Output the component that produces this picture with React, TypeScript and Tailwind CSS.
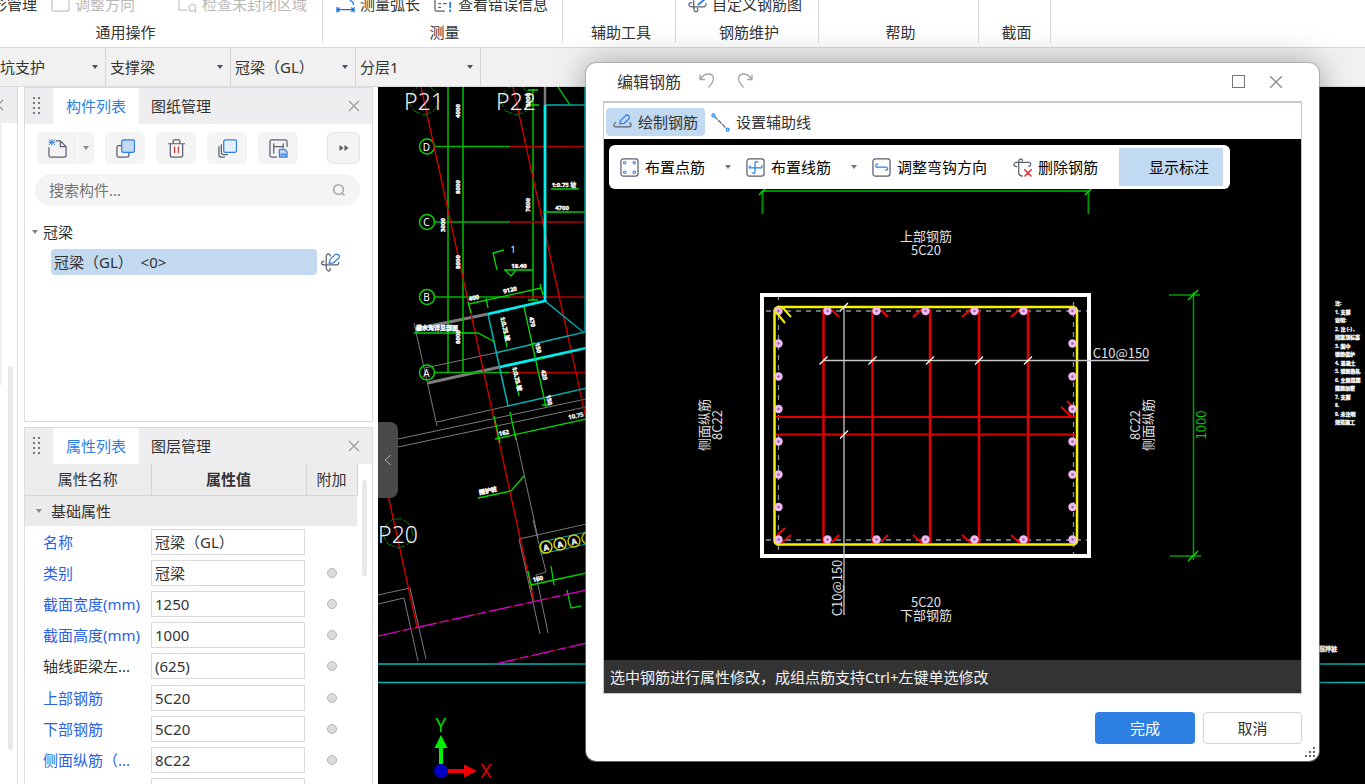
import type { ReactNode } from 'react';

const GREEN = '#00d800';
const CYAN = '#00f0f0';
const RED = '#d80000';
const GRAY = '#7c7c7c';

/* ---------- small shared pieces ---------- */

function Caret({ className = 'text-[#4b5060]' }: { className?: string }) {
  return (
    <svg className={`h-1 w-2 shrink-0 ${className}`} viewBox="0 0 8 4">
      <path d="M1 0H7L4 4Z" fill="currentColor" />
    </svg>
  );
}

function CloseIcon({ className = 'h-3 w-3' }: { className?: string }) {
  return (
    <svg className={className} viewBox="0 0 12 12" stroke="currentColor" strokeWidth="1.200" fill="none">
      <path d="M1 1L11 11M11 1L1 11" />
    </svg>
  );
}

function Icon({ children }: { children: ReactNode }) {
  return (
    <svg
      className="h-[19px] w-[19px] shrink-0"
      viewBox="0 0 20 20"
      fill="none"
      stroke="#5a5f70"
      strokeWidth="1.300"
      strokeLinecap="round"
      strokeLinejoin="round"
    >
      {children}
    </svg>
  );
}

const BLUE = '#2d7fe8';

const NewIcon = () => (
  <Icon>
    <path d="M8.500 2H13L19 8V17Q19 19 17 19H3Q1 19 1 17V9M13 2V8H19" />
    <path d="M4 0.500V6.500M1 3.500H7M1 1L7 6M7 1L1 6" stroke={BLUE} strokeWidth="1" />
  </Icon>
);
const CopyIcon = () => (
  <Icon>
    <path d="M6 7H3Q1 7 1 9V17Q1 19 3 19H11Q13.500 19 13.500 17V14.500" />
    <rect x="6" y="1" width="13.500" height="13" rx="2" fill="#c2d9f2" stroke={BLUE} />
  </Icon>
);
const TrashIcon = () => (
  <Icon>
    <path d="M1.500 5H18.500M6.500 4.500V2Q6.500 1 7.500 1H12.500Q13.500 1 13.500 2V4.500M3.500 5V17Q3.500 19 5.500 19H14.500Q16.500 19 16.500 17V5" />
    <path d="M8 8V15M12 8V15" stroke="#d63d3d" strokeLinecap="butt" />
  </Icon>
);
const LayersIcon = () => (
  <Icon>
    <path d="M1 8V16.500Q1 19 3 19H7M3.500 6V14Q3.500 16.500 6 16.500H10" />
    <rect x="6" y="1" width="13.500" height="13" rx="2" fill="#e3effc" stroke={BLUE} />
  </Icon>
);
const SaveFormIcon = () => (
  <Icon>
    <path d="M8 19H3Q1 19 1 17V3Q1 1 3 1H17Q19 1 19 3V8M5 5V15M5 8H15M15 5V9" />
    <path d="M11 11H16.500L19 13.500V19H11ZM13 19V16H17V19" stroke={BLUE} fill="#c2d9f2" />
  </Icon>
);
const BarEditIcon = () => (
  <Icon>
    <path d="M3 8.500Q0.500 9 0.500 11Q1 12.500 3 12.500H17Q19 12 18.500 10M10 3Q9.500 1 7.500 1Q5.500 1.500 5.500 4V16Q6 18.500 8 19Q10 18.500 9.500 16" />
    <path d="M8.500 11L9.500 7L15 1.500Q16.500 0.500 18.500 2T18.500 5.500L13 10.500Z" stroke={BLUE} fill="#fff" />
  </Icon>
);
const DrawBarIcon = () => (
  <Icon>
    <path d="M3 10Q1 10.500 1 12.500T3 14.500H17Q19 14.500 19 12.500T17.500 10.500" />
    <path d="M7 11.500L8 8L13.500 2.500Q15 1.500 16.500 3T17 6L11.500 11Z" stroke={BLUE} />
  </Icon>
);
const AuxLineIcon = () => (
  <Icon>
    <path d="M3.500 3.500L16 16" strokeDasharray="4 2" />
    <circle cx="2.500" cy="2.500" r="1.500" stroke={BLUE} />
    <circle cx="17.500" cy="17.500" r="1.500" stroke={BLUE} />
  </Icon>
);
const DotBarIcon = () => (
  <Icon>
    <rect x="1" y="1" width="18" height="18" rx="2.500" />
    <g stroke={BLUE} strokeWidth="1.100">
      <circle cx="5" cy="5" r="1.300" />
      <circle cx="15" cy="5" r="1.300" />
      <circle cx="5" cy="15" r="1.300" />
      <circle cx="15" cy="15" r="1.300" />
    </g>
  </Icon>
);
const LineBarIcon = () => (
  <Icon>
    <rect x="1" y="1" width="18" height="18" rx="2.500" />
    <path
      stroke={BLUE}
      d="M4.500 8.500Q3 9 3.500 10.500H16Q17.500 10 16.500 8M12.500 4.500Q10 3 9.500 5V15Q9 17 6.500 15.500"
    />
  </Icon>
);
const HookIcon = () => (
  <Icon>
    <rect x="1" y="1" width="18" height="18" rx="2.500" />
    <path stroke={BLUE} d="M6 6.500Q4 6 4 8T6 9.500H15Q16.500 10 16.500 11.500T14 12.500" />
  </Icon>
);
const DeleteBarIcon = () => (
  <Icon>
    <path d="M4 9Q1 9 1 7T3 4.500H17Q19 5 18.500 7T16.500 8.500M10 3Q10 1 8 1Q6 1.500 6 4V16Q6.500 19 10 19" />
    <path d="M12.500 12.500L19 19M19 12.500L12.500 19" stroke="#e03a3a" strokeWidth="1.600" />
  </Icon>
);
const BoxIcon = () => (
  <Icon>
    <rect x="1" y="3" width="18" height="14" rx="2" stroke="#c4c4c4" />
  </Icon>
);
const RegionIcon = () => (
  <Icon>
    <path d="M1 3V16H9" stroke="#c4c4c4" />
    <circle cx="15" cy="13.500" r="3.500" stroke="#c4c4c4" />
    <path d="M17.500 16L19 18" stroke="#c4c4c4" />
  </Icon>
);
const MeasureIcon = () => (
  <Icon>
    <path d="M1 13V18M19 13V18M1 15.500H19M3.500 13.500L1.500 15.500L3.500 17.500M16.500 13.500L18.500 15.500L16.500 17.500M15 6Q19 7 18 10" stroke="#1f6fd0" />
  </Icon>
);
const ErrorIcon = () => (
  <Icon>
    <path d="M1 3V15Q1 17 3 17H11M5 9H7M10 9H13M5 13H7" />
    <path d="M17 8V13M17 16V17" stroke={BLUE} strokeWidth="2" />
  </Icon>
);
const CustomIcon = () => (
  <Icon>
    <path d="M4 8Q1 8 1 10T4 12.500H16Q19 12.500 19 9M6 6V14Q6.500 18 9 17.500Q11 17 10 14" />
    <path d="M11 10L17 5" stroke={BLUE} strokeWidth="2" />
  </Icon>
);

/* ---------- ribbon ---------- */

function RibbonItem({ icon, text, muted }: { icon?: ReactNode; text: string; muted?: boolean }) {
  return (
    <button className={`flex items-center gap-[5px] whitespace-nowrap ${muted ? 'text-[#b9b9b9]' : ''}`}>
      {icon}
      {text}
    </button>
  );
}

function RibbonGroup({ width, label, labelClass = '', children }: { width: string; label: string; labelClass?: string; children?: ReactNode }) {
  return (
    <section className={`flex h-[43px] shrink-0 flex-col justify-end gap-[5px] border-r border-[#dcdcdc] ${width}`}>
      <div className="flex h-6 items-center">{children}</div>
      <h2 className={`text-center leading-[22px] ${labelClass}`}>{label}</h2>
    </section>
  );
}

function Ribbon() {
  return (
    <header className="flex h-12 shrink-0 overflow-hidden border-b border-[#d9d9d9] bg-white">
      <RibbonGroup width="w-[323px]" label="通用操作" labelClass="pr-[71px]">
        <div className="-ml-2 flex items-center">
          <RibbonItem text="形管理" />
          <div className="ml-3.5">
            <RibbonItem icon={<BoxIcon />} text="调整方向" muted />
          </div>
          <div className="ml-[43px]">
            <RibbonItem icon={<RegionIcon />} text="检查未封闭区域" muted />
          </div>
        </div>
      </RibbonGroup>
      <RibbonGroup width="w-[240px]" label="测量" labelClass="pl-1">
        <div className="ml-[13px] flex items-center gap-3.5">
          <RibbonItem icon={<MeasureIcon />} text="测量弧长" />
          <RibbonItem icon={<ErrorIcon />} text="查看错误信息" />
        </div>
      </RibbonGroup>
      <RibbonGroup width="w-[113px]" label="辅助工具" labelClass="pl-1" />
      <RibbonGroup width="w-[143px]" label="钢筋维护" labelClass="pl-1">
        <div className="ml-3">
          <RibbonItem icon={<CustomIcon />} text="自定义钢筋图" />
        </div>
      </RibbonGroup>
      <RibbonGroup width="w-[160px]" label="帮助" labelClass="pl-1" />
      <RibbonGroup width="w-[72px]" label="截面" labelClass="pl-1" />
    </header>
  );
}

function SelectorBar() {
  const items = [
    { name: '专业', value: '坑支护', cls: 'w-[106px] pl-0' },
    { name: '类型', value: '支撑梁', cls: 'w-[125px] pl-1' },
    { name: '构件', value: '冠梁（GL）', cls: 'w-[125px] pl-1' },
    { name: '分层', value: '分层1', cls: 'w-[125px] pl-1' },
  ];
  return (
    <nav className="flex h-[39px] shrink-0 border-b border-[#dcdcdc] bg-[#f1f1f1]">
      {items.map((it) => (
        <div key={it.name} className={`relative flex items-center border-r border-[#d4d4d4] ${it.cls}`}>
          <select aria-label={it.name} className="h-full w-full appearance-none bg-transparent pr-5 outline-none">
            <option>{it.value}</option>
          </select>
          <div className="pointer-events-none absolute right-1.5">
            <Caret />
          </div>
        </div>
      ))}
    </nav>
  );
}

/* ---------- left panels ---------- */

function PanelTabs({ active, other }: { active: string; other: string }) {
  return (
    <div className="flex h-9 shrink-0 items-center bg-[#eeeef0]" role="tablist">
      <svg className="mx-2 h-5 w-3 shrink-0" viewBox="0 0 12 20" fill="#77777c">
        {[1, 6, 11, 16].map((y) => (
          <g key={y}>
            <rect x="0" y={y} width="2" height="2" />
            <rect x="5" y={y} width="2" height="2" />
          </g>
        ))}
      </svg>
      <button role="tab" aria-selected="true" className="h-full w-[86px] bg-white text-[#2d7fe0]">
        {active}
      </button>
      <button role="tab" aria-selected="false" className="h-full px-3">
        {other}
      </button>
      <button aria-label="关闭" className="mr-3 ml-auto text-[#9a9a9a]">
        <CloseIcon />
      </button>
    </div>
  );
}

const toolBtn = 'flex h-8 w-10 items-center justify-center rounded-md bg-[#f4f4f4]';

function ComponentPanel() {
  return (
    <section className="flex h-[335px] shrink-0 flex-col border border-[#dcdcdc] bg-white">
      <PanelTabs active="构件列表" other="图纸管理" />
      <div className="mx-3 mt-2 flex items-center gap-[11px]">
        <div className="flex gap-px">
          <button aria-label="新建" className="flex h-8 w-10 items-center justify-center rounded-l-md bg-[#f4f4f4]">
            <NewIcon />
          </button>
          <button aria-label="新建选项" className="flex h-8 w-4 items-center justify-center rounded-r-md bg-[#f4f4f4]">
            <Caret className="text-[#8c8c8c]" />
          </button>
        </div>
        <button aria-label="复制" className={toolBtn}><CopyIcon /></button>
        <button aria-label="删除" className={toolBtn}><TrashIcon /></button>
        <button aria-label="层间复制" className={toolBtn}><LayersIcon /></button>
        <button aria-label="存档" className={toolBtn}><SaveFormIcon /></button>
        <button aria-label="更多" className="ml-auto flex h-8 w-[33px] items-center justify-center rounded-md border border-[#e3e5e7] bg-[#f4f4f4]">
          <svg className="h-2 w-2.5" viewBox="0 0 10 8" fill="#555a66">
            <path d="M0.500 1L4.500 4L0.500 7ZM5.500 1L9.500 4L5.500 7Z" />
          </svg>
        </button>
      </div>
      <label className="mr-3 ml-2.5 mt-2.5 flex h-8 items-center rounded-full bg-[#f4f4f4] px-3.5">
        <input aria-label="搜索构件" placeholder="搜索构件..." className="min-w-0 flex-1 bg-transparent outline-none placeholder:text-[#757575]" />
        <svg className="h-3.5 w-3.5" viewBox="0 0 14 14" fill="none" stroke="#a8a8a8" strokeWidth="1.600">
          <circle cx="6.500" cy="6.500" r="4.800" />
          <path d="M10 10L12.500 12.500" />
        </svg>
      </label>
      <div className="mt-3.5 flex h-6 items-center gap-1 pl-1.5">
        <Caret className="text-[#808080]" />
        冠梁
      </div>
      <div className="mt-[5px] flex items-center gap-1 pl-[26px]">
        <button className="flex h-[26px] w-[266px] items-center rounded bg-[#c2d9f0] pl-[3px] whitespace-pre">
          {'冠梁（GL）  <0>'}
        </button>
        <BarEditIcon />
      </div>
    </section>
  );
}

const props: { label: string; value: string; plain?: boolean; fixed?: boolean }[] = [
  { label: '名称', value: '冠梁（GL）', fixed: true },
  { label: '类别', value: '冠梁' },
  { label: '截面宽度(mm)', value: '1250' },
  { label: '截面高度(mm)', value: '1000' },
  { label: '轴线距梁左...', value: '(625)', plain: true },
  { label: '上部钢筋', value: '5C20' },
  { label: '下部钢筋', value: '5C20' },
  { label: '侧面纵筋（...', value: '8C22' },
  { label: '', value: '' },
];

function PropertyPanel() {
  return (
    <section className="flex min-h-0 flex-1 flex-col overflow-hidden border border-b-0 border-[#dcdcdc] bg-white">
      <PanelTabs active="属性列表" other="图层管理" />
      <div className="flex items-start overflow-hidden">
        <table className="h-[343px] w-[332px] shrink-0 table-fixed border-collapse">
          <colgroup>
            <col className="w-[126px]" />
            <col className="w-[155px]" />
            <col className="w-[51px]" />
          </colgroup>
          <thead>
            <tr className="h-[31px] bg-[#ececec]">
              <th className="border-r border-b border-[#d4d4d4] font-normal">属性名称</th>
              <th className="border-r border-b border-[#d4d4d4] font-semibold">属性值</th>
              <th className="border-r border-b border-[#d4d4d4] font-normal">附加</th>
            </tr>
          </thead>
          <tbody>
            <tr className="h-[31px] bg-[#ebebeb]">
              <td colSpan={3}>
                <div className="flex items-center gap-2 pl-2.5">
                  <Caret className="text-[#8a8a8a]" />
                  基础属性
                </div>
              </td>
            </tr>
            {props.map((p, i) => (
              <tr key={i}>
                <td className={`pl-[18px] whitespace-nowrap ${p.plain ? '' : 'text-[#2b62e3]'}`}>
                  <label htmlFor={`prop-${i}`}>{p.label}</label>
                </td>
                <td>
                  <input
                    id={`prop-${i}`}
                    aria-label={p.label || '其他'}
                    defaultValue={p.value}
                    className="block h-[26px] w-[154px] border border-[#dadada] bg-white pl-[3px] outline-none"
                  />
                </td>
                <td>
                  {!p.fixed && (
                    <input
                      type="checkbox"
                      aria-label={`附加 ${p.label}`}
                      className="mx-auto block h-2.5 w-2.5 appearance-none rounded-full border border-[#b4b4b8] bg-[#dcdcde]"
                    />
                  )}
                </td>
              </tr>
            ))}
          </tbody>
        </table>
        <div className="mt-4 ml-1 h-24 w-[5px] rounded-full bg-[#e8e8e8]" />
      </div>
    </section>
  );
}

/* ---------- site plan ---------- */

function Note({ x, y, t, r = 0, s = 6 }: { x: number; y: number; t: string; r?: number; s?: number }) {
  return (
    <text
      x={x}
      y={y}
      fontSize={s}
      fontWeight="700"
      fill="#fff"
      stroke="#fff"
      strokeWidth="0.400"
      textAnchor="middle"
      dominantBaseline="central"
      transform={`rotate(${r} ${x} ${y})`}
    >
      {t}
    </text>
  );
}

function GridBubble({ y, t }: { y: number; t: string }) {
  return (
    <g>
      <circle cx="427" cy={y} r="7.500" fill="none" stroke={GREEN} strokeWidth="1.500" />
      <text x="426.500" y={y} fontSize="10" fill="#fff" textAnchor="middle" dominantBaseline="central">
        {t}
      </text>
      <path d={`M435 ${y}H510`} stroke="#00b400" strokeWidth="1.300" />
      <path d={`M510 ${y}H600`} stroke="#b80000" strokeWidth="1.300" />
    </g>
  );
}

function PileTag({ x, y, t }: { x: number; y: number; t: string }) {
  return (
    <g>
      <path
        d={`M${x - 5} ${y - 15}L${x + 5} ${y - 15}L${x + 13} ${y - 8}L${x + 15} ${y + 2}L${x + 9} ${y + 11}L${x} ${y + 14}L${x - 10} ${y + 10}L${x - 15} ${y + 1}L${x - 12} ${y - 9}Z`}
        fill="none"
        stroke="#007c00"
        strokeDasharray="9 2"
      />
      <text x={x} y={y} fontSize="23" fill="#f0f0f0" fontWeight="300" textAnchor="middle" dominantBaseline="central">
        {t}
      </text>
    </g>
  );
}

const sideNotes = ['注:', '1. 支撑', '说明:', '2. 注  (-)  ,', '冠梁顶标高', '3.   图中', '钢筋保护', '4. 混凝土', '5. 钢筋热轧', '6. 主筋连接', '箍筋加密', '7. 支撑', '8.', '9. 未注明', '规范施工'];

function SitePlan() {
  return (
    <svg className="h-full w-full" fill="none" fontFamily="'Noto Sans', 'Noto Sans CJK SC', sans-serif">
      <g transform="translate(-378 -87)">
        <g stroke={GRAY}>
          <path d="M425 368L495 353M414 323L437 426M437 422L508 406M398 439L600 396M398 447L600 404" />
          <path d="M488 314L415 329M500 367L428 383" strokeWidth="3" />
          <path d="M545 87V105" strokeWidth="2.500" />
          <path d="M515 433L538 538M533 520L546 572L536 575L548 633M600 521L519 539L540 634M378 595L410 588L426 659M378 604L404 598L418 661" />
        </g>
        <path d="M448 87V372M463 87V372M533 89V300" stroke="#00c000" strokeWidth="1.500" />
        <GridBubble y={146.5} t="D" />
        <GridBubble y={222} t="C" />
        <GridBubble y={297} t="B" />
        <GridBubble y={372.5} t="A" />
        <g stroke={RED} strokeWidth="1.300">
          <path d="M421 87L534 601M513 87L586 418L600 482M388 495L417 627" />
        </g>
        <g stroke="#00b4b4">
          <path d="M545 105H600M585 87V332M545 301L583 332M488 314L508 406L600 385M495 353L585 332" strokeWidth="1.500" />
          <path d="M378 664H1365M378 682.500H1365" strokeWidth="1.500" />
          <path d="M600 529L541 542V554L600 541" />
        </g>
        <path d="M545 105V301L488 314M500 367L600 345" stroke={CYAN} strokeWidth="2.800" />
        <g stroke={GREEN} strokeWidth="1.300">
          <path d="M414 333H478L495 342M501 317L507 347M513 367L519 396M524 307L546 407M469 304L541 288M468 302L471 313M486 298L488 308M540 284L543 295" />
          <path d="M494 416L500 443M510 412L516 440M495 439L600 416M478 498L511 491L524 476M528 571L532 590M551 566L554 585M531 585L600 570M567 590L571 608L581 606" />
          <path d="M497 270L493 253L504 250M504 270H533M505 270L511 276L516 270M551 189H579M543 212H586M558 87L570 105M528 90H538M529 105H539M528 300H538M542 405H550M529 345L535 343M537 360L543 358" />
        </g>
        <g strokeWidth="1.200">
          <path d="M378 636L600 587M495 664L600 640" stroke="#700000" />
          <path d="M378 636L600 587" stroke="#e000e0" strokeDasharray="22 4 8 4" />
          <path d="M495 664L600 640" stroke="#e000e0" strokeDasharray="22 4 8 4" />
        </g>
        <PileTag x={424} y={101} t="P21" />
        <PileTag x={516} y={101} t="P22" />
        <PileTag x={398} y={534} t="P20" />
        <Note x={458} y={111} t="4000" r={-90} />
        <Note x={458} y={187} t="8000" r={-90} />
        <Note x={458} y={262} t="8000" r={-90} />
        <Note x={458} y={337} t="8000" r={-90} />
        <Note x={443} y={225} t="3000" r={-90} />
        <Note x={528} y={205} t="7600" r={-90} />
        <Note x={528} y={100} t="3000" r={-90} />
        <Note x={564} y={185} t="1:0.75  坡" />
        <Note x={562} y={208} t="4700" />
        <text x="513" y="253" fontSize="9" fill="#fff" textAnchor="middle">1</text>
        <Note x={519} y={266} t="18.40" />
        <Note x={474} y={298} t="400" r={-12} />
        <Note x={510} y={290} t="9120" r={-12} />
        <Note x={437} y={328} t="截水沟详见剖面" />
        <Note x={505} y={329} t="1:0.75 坡" r={77} />
        <Note x={517} y={379} t="1:0.75 坡" r={77} />
        <Note x={532} y={322} t="470" r={77} />
        <Note x={538} y={348} t="150" r={77} />
        <Note x={544} y={375} t="420" r={77} />
        <Note x={549} y={400} t="150" r={77} />
        <Note x={504} y={433} t="162" r={-12} />
        <Note x={576} y={416} t="10.75" r={-12} />
        <Note x={488} y={491} t="围护桩" r={-12} />
        <Note x={538} y={579} t="160" r={-12} />
        <Note x={1328} y={649} t="搅拌桩" />
        {[546, 560, 574, 588].map((x, i) => (
          <g key={x}>
            <circle cx={x} cy={547 - i * 3} r="6" stroke="#d8d800" strokeWidth="1.500" />
            <Note x={x} y={547 - i * 3} t="A" r={-12} s={8} />
          </g>
        ))}
        <g fontSize="5" fontWeight="700" fill="#fff" stroke="#fff" strokeWidth="0.300" xmlSpace="preserve">
          {sideNotes.map((t, i) => (
            <text key={i} x="1335" y={305 + i * 8.500}>
              {t}
            </text>
          ))}
        </g>
        <path d="M441 764V746" stroke="#00f000" strokeWidth="4" />
        <path d="M434.500 748H447.500L441 735Z" fill="#00f000" />
        <path d="M446 771H466" stroke="#f00000" strokeWidth="4" />
        <path d="M464 764.500V777.500L477 771Z" fill="#f00000" />
        <circle cx="441" cy="771" r="7" fill="#0000c0" />
        <text x="441" y="732" fontSize="19" fill="#00d800" textAnchor="middle">Y</text>
        <text x="486" y="778" fontSize="19" fill="#e80000" textAnchor="middle">X</text>
      </g>
    </svg>
  );
}

/* ---------- section drawing ---------- */

const barX = [779, 828, 877, 926, 975, 1024, 1073];
const barY = [343.5, 376.5, 409, 441.5, 474.5, 507];
const tieX = [823.5, 872.5, 930, 979, 1028];

function Bar({ x, y }: { x: number; y: number }) {
  return (
    <g>
      <circle cx={x} cy={y} r="4.200" fill="#f0b8f4" />
      <circle cx={x} cy={y} r="1.200" fill="#8a6a9a" />
    </g>
  );
}

function Label({ x, y, t, r = 0, fill = '#e0e0e0', s = 13 }: { x: number; y: number; t: string; r?: number; fill?: string; s?: number }) {
  return (
    <text x={x} y={y} fontSize={s} fill={fill} textAnchor="middle" dominantBaseline="central" transform={`rotate(${r} ${x} ${y})`}>
      {t}
    </text>
  );
}

function SectionDrawing() {
  return (
    <svg className="h-full w-full" fill="none" fontFamily="'Noto Sans CJK SC', 'Noto Sans', sans-serif">
      <g transform="translate(-604 -139)">
        <path d="M762 191H1090M762.500 191V214M1088.500 191V214" stroke="#009000" strokeWidth="2" />
        <path d="M759 195L766 188M1085 195L1092 188" stroke="#00e000" strokeWidth="1.500" />
        <g stroke="#00a000" strokeWidth="1.500">
          <path d="M1193.500 292V560M1169 295H1200M1170 556H1201" />
          <path d="M1188 300L1198 290M1188 561L1198 551" stroke="#00e000" />
        </g>
        <g stroke="#8496a8" strokeWidth="1.300" strokeDasharray="5 5">
          <path d="M778.500 295V556M1073.500 302V556M766 311H1087M766 540H1087" />
        </g>
        <rect x="762" y="295" width="327" height="261" stroke="#fff" strokeWidth="4" />
        <rect x="774.500" y="307" width="302.500" height="237.500" rx="4" stroke="#f4f400" strokeWidth="2.500" />
        <g stroke="#e00000" strokeWidth="2.500">
          {tieX.map((x) => (
            <path key={x} d={`M${x} 309V543`} />
          ))}
          <path d="M776 417H1075M776 434.500H1075" strokeWidth="2.200" />
        </g>
        <g stroke="#f00000" strokeWidth="2">
          <path d="M832 310L839 317M881 310L888 317M913 317L922 309M962 317L971 309M1011 317L1020 309" />
          <path d="M832 542L839 535M881 542L888 535M913 535L922 543M962 535L971 543M1011 535L1020 543" />
          <path d="M777 535L785 528M781 543L791 535M1061 407L1071 416M1067 401L1074 408" />
        </g>
        {barX.map((x) => (
          <g key={x}>
            <Bar x={x - 0.5} y={311} />
            <Bar x={x - 0.5} y={539.5} />
          </g>
        ))}
        {barY.map((y) => (
          <g key={y}>
            <Bar x={778.5} y={y} />
            <Bar x={1072.5} y={y} />
          </g>
        ))}
        <path d="M782 307L791 317M776 312L785 323" stroke="#f0f000" strokeWidth="2" />
        <g stroke="#c8c8c8" strokeWidth="1.300">
          <path d="M823 360.500H1149M844 307V615" />
          {tieX.map((x) => (
            <path key={x} d={`M${x - 4} 364.500L${x + 4} 356.500`} stroke="#fff" />
          ))}
          <path d="M840 311L848 303M840 438.500L848 430.500" stroke="#fff" />
        </g>
        <Label x={926} y={235} t="上部钢筋" />
        <Label x={926} y={249} t="5C20" />
        <Label x={926} y={601} t="5C20" />
        <Label x={926} y={614} t="下部钢筋" />
        <Label x={703} y={425} t="侧面纵筋" r={-90} />
        <Label x={716} y={425} t="8C22" r={-90} />
        <Label x={1134} y={425} t="8C22" r={-90} />
        <Label x={1147} y={425} t="侧面纵筋" r={-90} />
        <Label x={1200} y={425} t="1000" r={-90} fill="#00d000" />
        <Label x={1121} y={352} t="C10@150" />
        <Label x={836} y={588} t="C10@150" r={-90} />
      </g>
    </svg>
  );
}

/* ---------- dialog ---------- */

function EditDialog() {
  return (
    <div
      role="dialog"
      aria-label="编辑钢筋"
      className="absolute top-[63px] left-[586px] flex w-[733px] flex-col rounded-[10px] bg-white px-[17px] pb-[17px] shadow-[0_0_32px_rgba(0,0,0,0.35)] ring-1 ring-[#9a9a9a]/60"
    >
      <div className="flex h-[38px] items-center pl-3.5">
        <h1 className="mr-[18px] text-base">编辑钢筋</h1>
        <button aria-label="撤销" className="mr-[22px] mb-0.5 text-[#a4a4a4]">
          <svg className="h-4 w-4" viewBox="0 0 16 16" fill="none" stroke="currentColor" strokeWidth="1.300">
            <path d="M1 1.500V6.500H6M1 6.500Q4.500 1 9.500 1T14.500 6Q14.500 8.500 9.500 14.500" />
          </svg>
        </button>
        <button aria-label="重做" className="mb-0.5 text-[#a4a4a4]">
          <svg className="h-4 w-4" viewBox="0 0 16 16" fill="none" stroke="currentColor" strokeWidth="1.300">
            <path d="M15 1.500V6.500H10M15 6.500Q11.500 1 6.500 1T1.500 6Q1.500 8.500 6.500 14.500" />
          </svg>
        </button>
        <button aria-label="最大化" className="mr-6 mb-0.5 ml-auto h-[13px] w-[13px] border border-[#777]" />
        <button aria-label="关闭" className="mr-[19px] text-[#8a8a8a]">
          <CloseIcon className="h-3.5 w-3.5" />
        </button>
      </div>

      <div className="border border-t-2 border-[#c4c8cc]">
        <div className="flex h-9 items-center gap-1 px-0.5 pt-0.5">
          <button className="flex h-7 items-center gap-1.5 rounded bg-[#c2d9f2] px-[7px]">
            <DrawBarIcon />
            绘制钢筋
          </button>
          <button className="flex h-7 items-center gap-1.5 px-0.5">
            <AuxLineIcon />
            设置辅助线
          </button>
        </div>

        <div className="relative h-[521px] bg-black">
          <SectionDrawing />
          <div className="absolute top-1.5 left-[5px] flex h-11 items-center rounded-md bg-white pr-[7px] pl-[11px] text-black">
            <button className="flex items-center gap-1.5">
              <DotBarIcon />
              布置点筋
            </button>
            <button aria-label="点筋选项" className="mr-3.5 ml-[19px]">
              <Caret className="text-[#777]" />
            </button>
            <button className="flex items-center gap-1.5">
              <LineBarIcon />
              布置线筋
            </button>
            <button aria-label="线筋选项" className="mr-3.5 ml-[19px]">
              <Caret className="text-[#777]" />
            </button>
            <button className="flex items-center gap-1.5">
              <HookIcon />
              调整弯钩方向
            </button>
            <button className="ml-[26px] flex items-center gap-1.5">
              <DeleteBarIcon />
              删除钢筋
            </button>
            <button aria-pressed="true" className="ml-[21px] h-[38px] bg-[#c2d9f2] pr-3.5 pl-[30px]">
              显示标注
            </button>
          </div>
        </div>
        <p className="flex h-[33px] items-center bg-[#333] pl-1.5 text-[#f2f2f2]">选中钢筋进行属性修改，成组点筋支持Ctrl+左键单选修改</p>
      </div>

      <div className="mt-[18px] flex justify-end gap-2">
        <button className="h-8 w-[100px] rounded bg-[#2d80e2] text-white">完成</button>
        <button className="h-8 w-[99px] rounded border border-[#d4d4d4] bg-white">取消</button>
      </div>
      <svg className="absolute right-[3px] bottom-[3px] h-3 w-3" viewBox="0 0 12 12" fill="#666">
        <path d="M9 1h2v2h-2zM9 5h2v2h-2zM9 9h2v2h-2zM5 5h2v2h-2zM5 9h2v2h-2zM1 9h2v2h-2z" />
      </svg>
    </div>
  );
}

/* ---------- page ---------- */

export default function App() {
  return (
    <div className="relative flex h-screen flex-col overflow-hidden bg-white font-['Noto_Sans','Noto_Sans_CJK_SC',sans-serif] text-[15px] leading-6 text-[#333]">
      <Ribbon />
      <SelectorBar />
      <main className="flex min-h-0 flex-1">
        <aside className="mr-1.5 flex w-[18px] shrink-0 flex-col overflow-hidden border-r border-[#d9d9d9] bg-white">
          <div className="flex h-9 shrink-0 items-center bg-[#eeeef0] text-[#8c8c8c]">
            <CloseIcon className="-ml-2 h-3 w-3" />
          </div>
          <div className="flex min-h-0 flex-1">
            <div className="h-[262px] w-0.5 bg-[#f1f1f4]" />
            <div className="mt-[243px] ml-1.5 h-96 w-[5px] rounded-full bg-[#e9e9e9]" />
          </div>
        </aside>
        <div className="flex w-[349px] shrink-0 flex-col gap-[5px]">
          <ComponentPanel />
          <PropertyPanel />
        </div>
        <div className="relative ml-[5px] min-w-0 flex-1 overflow-hidden bg-black">
          <SitePlan />
          <button aria-label="收起" className="absolute top-[335px] left-0 flex h-[76px] w-5 items-center justify-center rounded-r-lg bg-[#4a4a4a]">
            <svg className="h-3 w-2" viewBox="0 0 8 12" fill="none" stroke="#aaa">
              <path d="M7 1L1 6L7 11" />
            </svg>
          </button>
        </div>
      </main>
      <EditDialog />
    </div>
  );
}
